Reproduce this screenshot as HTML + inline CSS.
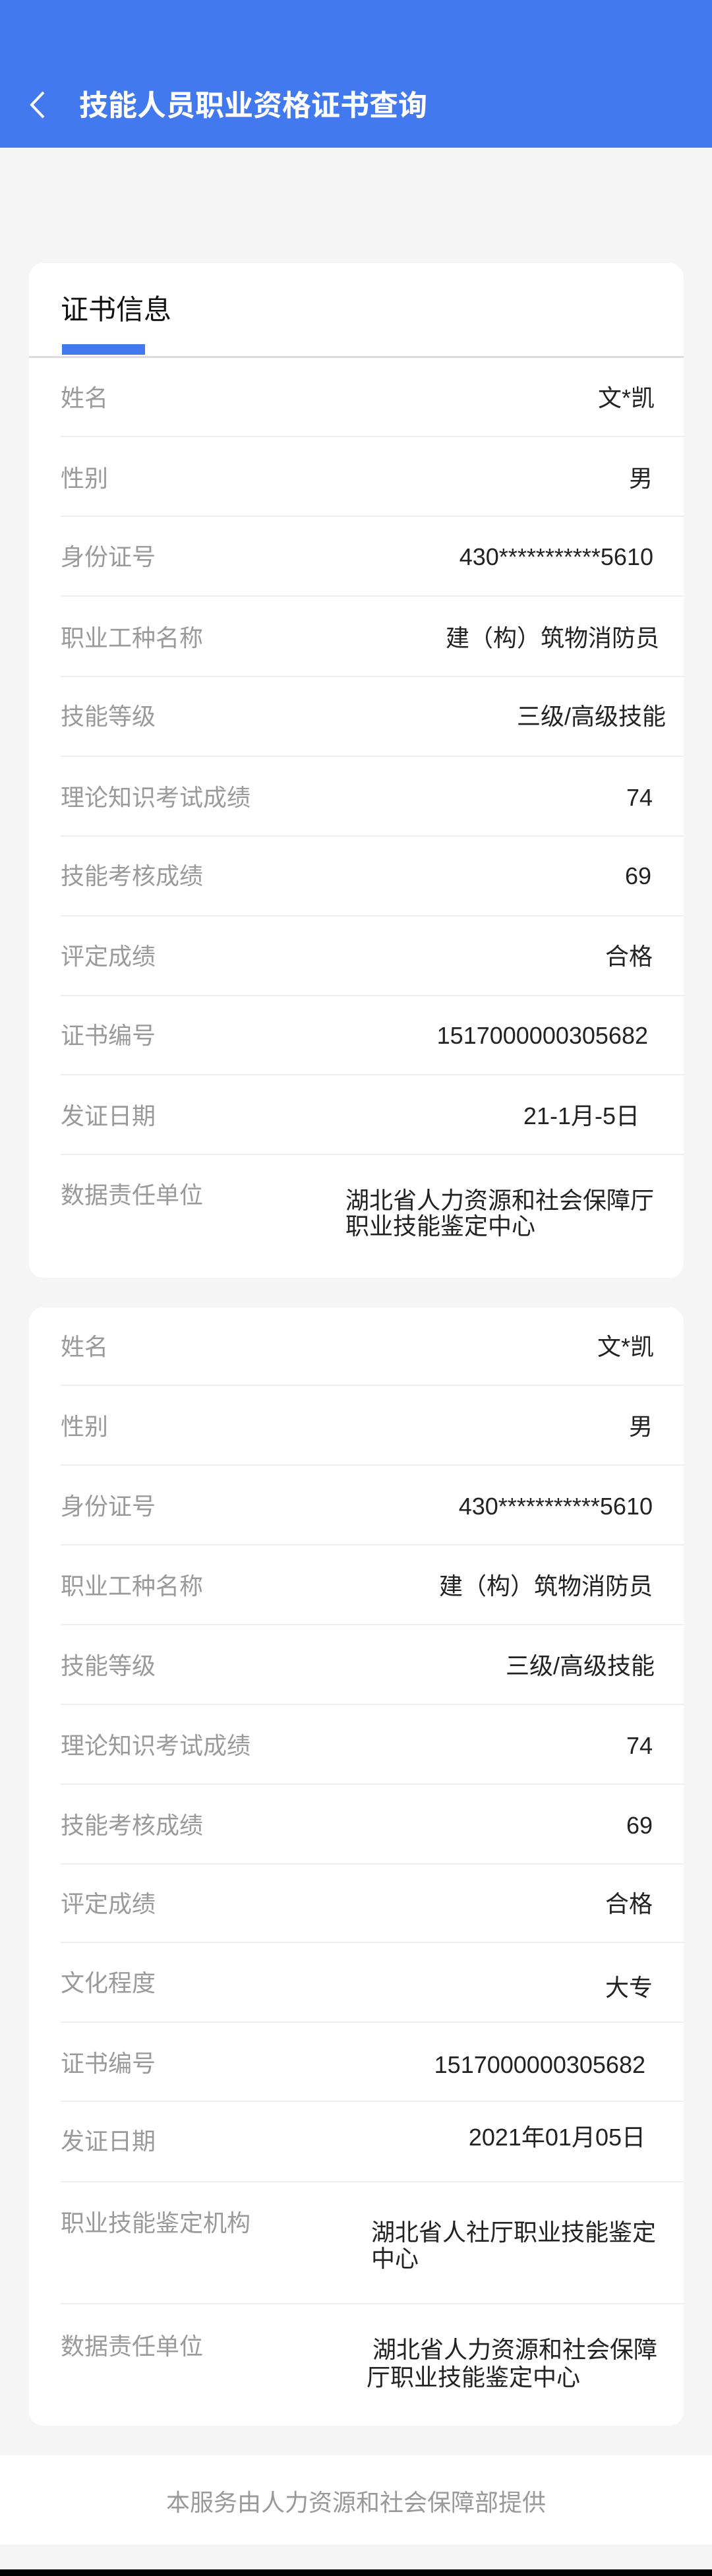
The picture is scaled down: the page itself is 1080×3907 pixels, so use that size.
<!DOCTYPE html>
<html><head><meta charset="utf-8"><style>
*{margin:0;padding:0;box-sizing:border-box}
body{width:1080px;height:3907px;background:#f5f5f5;position:relative;overflow:hidden;font-family:"Liberation Sans","Noto Sans CJK SC",sans-serif}
.hdr{position:absolute;left:0;top:0;width:1080px;height:224px;background:#4379ee}
.ttl{position:absolute;left:120px;top:136px;font-size:44px;line-height:50px;color:#fff;font-weight:bold}
.card{position:absolute;left:44px;width:993px;background:#fff;border-radius:22px}
.l,.v{position:absolute;font-size:36px;line-height:44px;white-space:nowrap}
.l{left:92px;color:#9a9a9a}
.v{color:#222;text-align:right}
.d{position:absolute;left:92px;width:945px;height:2px;background:#eeeeee}
.m{position:absolute;font-size:36px;line-height:44px;color:#222}
</style></head><body>
<div class="hdr">
<svg style="position:absolute;left:40px;top:136px" width="34" height="46" viewBox="0 0 34 46"><path d="M26 4 L8 23 L26 42" fill="none" stroke="#fff" stroke-width="4"/></svg>
<div class="ttl">技能人员职业资格证书查询</div>
</div>
<div class="card" style="top:399px;height:1539px"></div>
<div class="card" style="top:1983px;height:1696px"></div>
<div style="position:absolute;left:92px;top:446px;font-size:42px;line-height:48px;color:#111">证书信息</div>
<div style="position:absolute;left:94px;top:522px;width:126px;height:16px;background:#4379ee"></div>
<div style="position:absolute;left:44px;top:540px;width:993px;height:3px;background:#dcdcdc"></div>

<div class="l" style="top:582px">姓名</div><div class="v" style="top:582px;right:87px">文*凯</div><div class="d" style="top:661px"></div>
<div class="l" style="top:704px">性别</div><div class="v" style="top:704px;right:90px">男</div><div class="d" style="top:782px"></div>
<div class="l" style="top:823px">身份证号</div><div class="v" style="top:823px;right:89px">430***********5610</div><div class="d" style="top:903px"></div>
<div class="l" style="top:946px">职业工种名称</div><div class="v" style="top:946px;right:80px">建（构）筑物消防员</div><div class="d" style="top:1025px"></div>
<div class="l" style="top:1065px">技能等级</div><div class="v" style="top:1065px;right:70px">三级/高级技能</div><div class="d" style="top:1146px"></div>
<div class="l" style="top:1188px">理论知识考试成绩</div><div class="v" style="top:1188px;right:90px">74</div><div class="d" style="top:1267px"></div>
<div class="l" style="top:1307px">技能考核成绩</div><div class="v" style="top:1307px;right:92px">69</div><div class="d" style="top:1388px"></div>
<div class="l" style="top:1429px">评定成绩</div><div class="v" style="top:1429px;right:90px">合格</div><div class="d" style="top:1509px"></div>
<div class="l" style="top:1549px">证书编号</div><div class="v" style="top:1549px;right:97px">1517000000305682</div><div class="d" style="top:1629px"></div>
<div class="l" style="top:1671px">发证日期</div><div class="v" style="top:1671px;right:110px">21-1月-5日</div><div class="d" style="top:1750px"></div>
<div class="l" style="top:1791px">数据责任单位</div>
<div class="m" style="left:524px;top:1799px">湖北省人力资源和社会保障厅</div>
<div class="m" style="left:524px;top:1838px">职业技能鉴定中心</div>

<div class="l" style="top:2021px">姓名</div><div class="v" style="top:2021px;right:88px">文*凯</div><div class="d" style="top:2100px"></div>
<div class="l" style="top:2142px">性别</div><div class="v" style="top:2142px;right:90px">男</div><div class="d" style="top:2221px"></div>
<div class="l" style="top:2263px">身份证号</div><div class="v" style="top:2263px;right:90px">430***********5610</div><div class="d" style="top:2342px"></div>
<div class="l" style="top:2384px">职业工种名称</div><div class="v" style="top:2384px;right:90px">建（构）筑物消防员</div><div class="d" style="top:2463px"></div>
<div class="l" style="top:2505px">技能等级</div><div class="v" style="top:2505px;right:87px">三级/高级技能</div><div class="d" style="top:2584px"></div>
<div class="l" style="top:2626px">理论知识考试成绩</div><div class="v" style="top:2626px;right:90px">74</div><div class="d" style="top:2705px"></div>
<div class="l" style="top:2747px">技能考核成绩</div><div class="v" style="top:2747px;right:90px">69</div><div class="d" style="top:2826px"></div>
<div class="l" style="top:2866px">评定成绩</div><div class="v" style="top:2866px;right:90px">合格</div><div class="d" style="top:2945px"></div>
<div class="l" style="top:2986px">文化程度</div><div class="v" style="top:2993px;right:90px">大专</div><div class="d" style="top:3066px"></div>
<div class="l" style="top:3108px">证书编号</div><div class="v" style="top:3110px;right:101px">1517000000305682</div><div class="d" style="top:3186px"></div>
<div class="l" style="top:3226px">发证日期</div><div class="v" style="top:3220px;right:101px">2021年01月05日</div><div class="d" style="top:3308px"></div>
<div class="l" style="top:3350px">职业技能鉴定机构</div>
<div class="m" style="left:563px;top:3364px">湖北省人社厅职业技能鉴定</div>
<div class="m" style="left:563px;top:3404px">中心</div>
<div class="d" style="top:3493px"></div>
<div class="l" style="top:3537px">数据责任单位</div>
<div class="m" style="left:565px;top:3542px">湖北省人力资源和社会保障</div>
<div class="m" style="left:556px;top:3584px">厅职业技能鉴定中心</div>

<div style="position:absolute;left:0;top:3724px;width:1080px;height:135px;background:#fff"></div>
<div style="position:absolute;left:0;top:3774px;width:1080px;text-align:center;font-size:36px;line-height:44px;color:#999">本服务由人力资源和社会保障部提供</div>
<div style="position:absolute;left:0;top:3897px;width:1080px;height:10px;background:#000"></div>
</body></html>
